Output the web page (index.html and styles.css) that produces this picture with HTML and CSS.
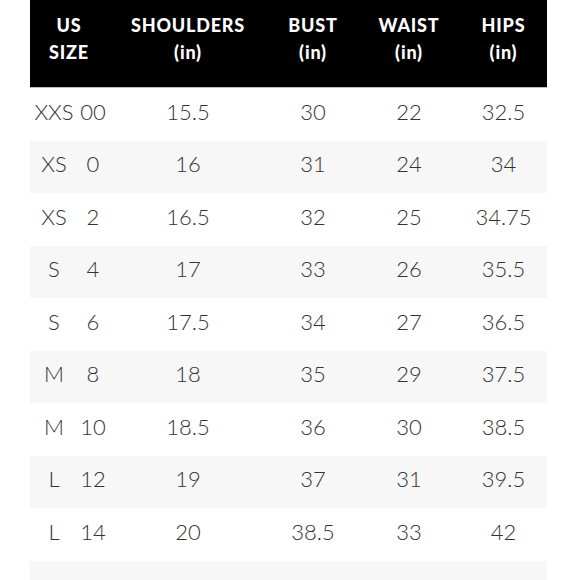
FILE: index.html
```html
<!DOCTYPE html>
<html lang="en">
<head>
<meta charset="utf-8">
<title>Size Chart</title>
<link rel="stylesheet" href="styles.css">
</head>
<body>
<div class="chart">
  <div class="row head">
    <div class="cell">US<br>SIZE</div>
    <div class="cell">SHOULDERS<br>(in)</div>
    <div class="cell">BUST<br>(in)</div>
    <div class="cell">WAIST<br>(in)</div>
    <div class="cell">HIPS<br>(in)</div>
  </div>
  <div class="row"><div class="cell size"><span>XXS</span><span>00</span></div><div class="cell">15.5</div><div class="cell">30</div><div class="cell">22</div><div class="cell">32.5</div></div>
  <div class="row alt"><div class="cell size"><span>XS</span><span>0</span></div><div class="cell">16</div><div class="cell">31</div><div class="cell">24</div><div class="cell">34</div></div>
  <div class="row"><div class="cell size"><span>XS</span><span>2</span></div><div class="cell">16.5</div><div class="cell">32</div><div class="cell">25</div><div class="cell">34.75</div></div>
  <div class="row alt"><div class="cell size"><span>S</span><span>4</span></div><div class="cell">17</div><div class="cell">33</div><div class="cell">26</div><div class="cell">35.5</div></div>
  <div class="row"><div class="cell size"><span>S</span><span>6</span></div><div class="cell">17.5</div><div class="cell">34</div><div class="cell">27</div><div class="cell">36.5</div></div>
  <div class="row alt"><div class="cell size"><span>M</span><span>8</span></div><div class="cell">18</div><div class="cell">35</div><div class="cell">29</div><div class="cell">37.5</div></div>
  <div class="row"><div class="cell size"><span>M</span><span>10</span></div><div class="cell">18.5</div><div class="cell">36</div><div class="cell">30</div><div class="cell">38.5</div></div>
  <div class="row alt"><div class="cell size"><span>L</span><span>12</span></div><div class="cell">19</div><div class="cell">37</div><div class="cell">31</div><div class="cell">39.5</div></div>
  <div class="row"><div class="cell size"><span>L</span><span>14</span></div><div class="cell">20</div><div class="cell">38.5</div><div class="cell">33</div><div class="cell">42</div></div>
  <div class="row alt"></div>
</div>
</body>
</html>
```
FILE: styles.css
```css
html, body {
  margin: 0;
  padding: 0;
  background: #fff;
  overflow: hidden;
}
.chart {
  width: 517px;
  margin-left: 30px;
  font-family: Lato, "Open Sans", sans-serif;
}
.row {
  display: grid;
  grid-template-columns: 78px 160px 90px 102px 87px;
  height: 52.5px;
  align-items: center;
  color: #333;
  font-size: 22px;
  font-weight: 300;
}
.row .cell {
  padding-bottom: 6px;
}
.row.alt {
  background: #f7f7f7;
}
.row.head {
  height: 87px;
  background: #000;
  color: #fff;
  font-weight: 900;
  font-size: 18px;
  letter-spacing: 0.8px;
  line-height: 27px;
  border-bottom: 1px solid #bdbdbd;
  box-sizing: content-box;
}
.row.head .cell {
  padding-bottom: 9px;
}
.cell {
  text-align: center;
}
.cell.size {
  display: grid;
  grid-template-columns: 48px 30px;
}
```
